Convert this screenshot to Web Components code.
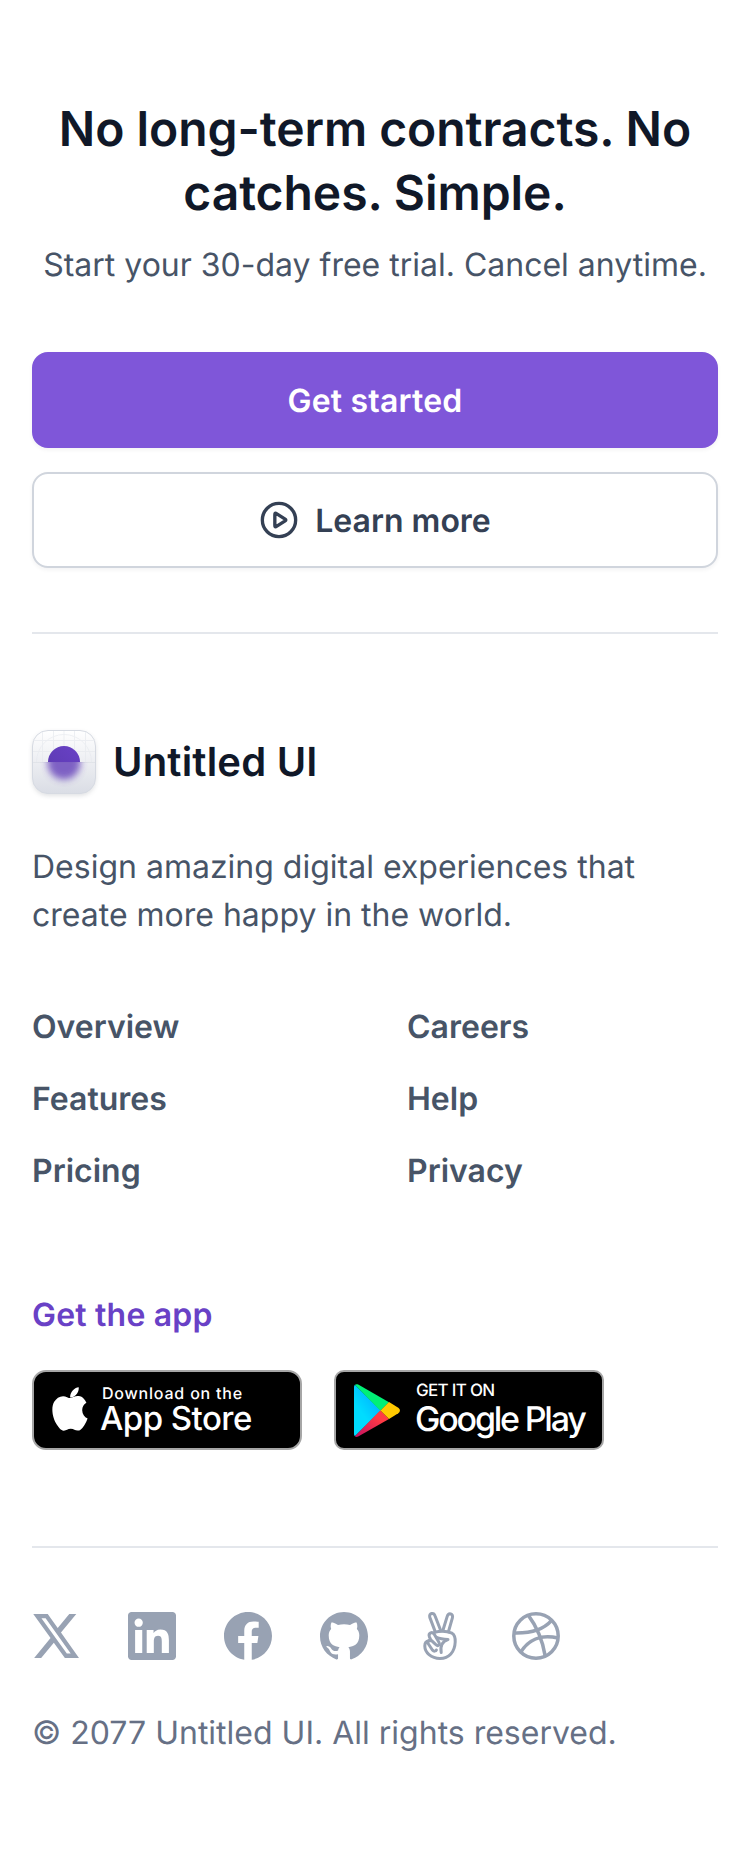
<!DOCTYPE html>
<html lang="en">
<head>
<meta charset="utf-8">
<title>Untitled UI</title>
<style>
html,body{margin:0;padding:0;background:#fff}
body{font-family:Inter,"Liberation Sans",sans-serif;font-size:32px;line-height:48px;color:#475467;text-rendering:geometricPrecision}
</style>
</head>
<body>
<cta-section>
  <span slot="title">No long-term contracts. No catches. Simple.</span>
  <span slot="text">Start your 30-day free trial. Cancel anytime.</span>
  <ui-button variant="primary">Get started</ui-button>
  <ui-button variant="secondary"><ui-icon slot="icon" name="play" size="40"></ui-icon>Learn more</ui-button>
</cta-section>
<site-footer>
  <brand-logo slot="brand">Untitled UI</brand-logo>
  <span slot="about">Design amazing digital experiences that create more happy in the world.</span>
  <footer-link slot="link">Overview</footer-link>
  <footer-link slot="link">Careers</footer-link>
  <footer-link slot="link">Features</footer-link>
  <footer-link slot="link">Help</footer-link>
  <footer-link slot="link">Pricing</footer-link>
  <footer-link slot="link">Privacy</footer-link>
  <span slot="apps-title">Get the app</span>
  <app-store-badge slot="app"></app-store-badge>
  <google-play-badge slot="app"></google-play-badge>
  <ui-icon slot="social" name="x" size="48"></ui-icon>
  <ui-icon slot="social" name="linkedin" size="48"></ui-icon>
  <ui-icon slot="social" name="facebook" size="48"></ui-icon>
  <ui-icon slot="social" name="github" size="48"></ui-icon>
  <ui-icon slot="social" name="angellist" size="48"></ui-icon>
  <ui-icon slot="social" name="dribbble" size="48"></ui-icon>
  <span slot="copyright">© 2077 Untitled UI. All rights reserved.</span>
</site-footer>
<script>
const define = (name, html) => customElements.define(name, class extends HTMLElement {
  constructor() {
    super();
    this.attachShadow({ mode: 'open' }).innerHTML = html;
  }
});

const ICONS = {
  play: '<g fill="none" stroke="currentColor" stroke-width="1.67" stroke-linecap="round" stroke-linejoin="round" transform="scale(1.2)"><circle cx="10" cy="10" r="8.33"/><path d="M7.917 7.471c0-.398 0-.597.083-.708a.417.417 0 0 1 .303-.166c.138-.01.306.098.64.313l3.934 2.529c.29.187.435.28.485.399a.417.417 0 0 1 0 .324c-.05.119-.195.212-.485.399L8.943 13.09c-.334.215-.502.323-.64.313A.417.417 0 0 1 8 13.237c-.083-.111-.083-.31-.083-.708z"/></g>',
  x: '<path transform="translate(-.7 -1.600) scale(1.06 1.133)" d="M18.244 2.250h3.308l-7.227 8.260 8.502 11.240H16.170l-5.214-6.817L4.990 21.750H1.680l7.730-8.835L1.254 2.250H8.080l4.713 6.231zm-1.161 17.520h1.833L7.084 4.126H5.117z"/>',
  linkedin: '<path d="M22.223 0H1.772C.792 0 0 .774 0 1.729v20.537C0 23.221.792 24 1.772 24h20.451c.98 0 1.777-.779 1.777-1.729V1.729C24 .774 23.203 0 22.223 0zM7.12 20.452H3.558V8.995H7.12v11.457zM5.339 7.434a2.064 2.064 0 1 1 0-4.128 2.064 2.064 0 0 1 0 4.128zM20.452 20.452h-3.558v-5.569c0-1.327-.024-3.037-1.852-3.037-1.851 0-2.133 1.449-2.133 2.944v5.662H9.356V8.995h3.413v1.566h.047c.474-.9 1.636-1.852 3.367-1.852 3.605 0 4.269 2.372 4.269 5.457v6.286z"/>',
  facebook: '<path d="M24 12c0-6.627-5.373-12-12-12S0 5.373 0 12c0 5.99 4.388 10.954 10.125 11.854V15.47H7.078V12h3.047V9.356c0-3.007 1.792-4.668 4.533-4.668 1.312 0 2.686.234 2.686.234v2.953H15.83c-1.491 0-1.956.925-1.956 1.875V12h3.328l-.532 3.469h-2.796v8.385C19.612 22.954 24 17.99 24 12z"/>',
  github: '<path fill-rule="evenodd" d="M12 0C5.370 0 0 5.500 0 12.300c0 5.300 3.440 9.800 8.200 11.390.600.110.820-.260.820-.580v-2.040c-3.340.730-4.040-1.610-4.040-1.610-.550-1.390-1.340-1.760-1.340-1.760-1.080-.740.090-.730.090-.730 1.200.090 1.840 1.240 1.840 1.240 1.070 1.830 2.800 1.300 3.490 1 .100-.780.420-1.310.760-1.610-2.670-.300-5.470-1.330-5.470-5.930 0-1.310.470-2.380 1.240-3.220-.130-.310-.540-1.530.110-3.180 0 0 1.010-.320 3.300 1.230a11.500 11.500 0 0 1 6.010 0c2.280-1.550 3.290-1.230 3.290-1.230.650 1.650.240 2.870.120 3.170.770.840 1.230 1.910 1.230 3.220 0 4.610-2.810 5.630-5.480 5.920.420.360.810 1.100.810 2.220v3.290c0 .320.220.700.830.580A12 12 0 0 0 24 12.300C24 5.500 18.630 0 12 0z"/>',
  angellist: '<g fill="none" stroke="currentColor" stroke-width="1.5" stroke-linejoin="round" stroke-linecap="round"><path d="M9.600 9.800 6.900 2.700C6.300.4 8.900.1 9.500 1.900L12.400 9.400"/><path d="M13.400 9.400 15.600 2.200C16.300.1 18.800.8 18.200 2.900L16.200 9.900"/><path d="M9.200 10.200C12 9.500 15.500 9.600 18 10.600 19.500 11.500 19.700 13 19.600 15 19.400 20 16.500 23.200 12 23.200 7.500 23.200 4.400 20.200 4.400 17 4.400 15.500 5.200 14.600 6.500 14.400"/><path d="M7.600 14.400 6.700 12.400C6 10.400 8.200 9.600 9.200 11.200L11.400 15C12.200 16.600 10.800 17.400 9.800 16.200L7.800 14.300C6.800 13.600 5.400 14.800 6.200 16L8.200 19C8.900 19.800 10 19.700 10.200 19"/><path d="M10.300 12.700C12 13.400 13.500 13.600 16 13.800 13.400 14.600 12 16.600 12.600 20.200"/></g>',
  dribbble: '<g fill="none" stroke="currentColor" stroke-width="1.75"><circle cx="12" cy="12" r="11.1"/><path d="M8.200 1.700C12 6.800 15.200 13.500 16.600 22"/><path d="M1 10.500c7.500.2 14.500-1.300 18.800-6.300"/><path d="M4.400 20.100C8 14 14.300 11 23 13"/></g>'
};

customElements.define('ui-icon', class extends HTMLElement {
  connectedCallback() {
    if (this.shadowRoot) return;
    const s = this.getAttribute('size');
    this.attachShadow({ mode: 'open' }).innerHTML =
      `<style>:host{display:block;flex:none}svg{display:block;overflow:visible}</style>
       <svg width="${s}" height="${s}" viewBox="0 0 24 24" fill="currentColor">${ICONS[this.getAttribute('name')]}</svg>`;
  }
});

define('ui-button', `<style>
:host{display:block}
button{box-sizing:border-box;width:100%;height:96px;display:flex;align-items:center;justify-content:center;gap:16px;border-radius:16px;font:600 32px/48px Inter,sans-serif;text-rendering:inherit;border:2px solid #7f56d9;background:#7f56d9;color:#fff;box-shadow:0 2px 4px rgba(16,24,40,.05);padding:0}
span{padding-top:2px}
:host([variant=primary]) span{letter-spacing:.18px}
:host([variant=secondary]) button{background:#fff;border-color:#d0d5dd;color:#344054}
</style><button><slot name="icon"></slot><span><slot></slot></span></button>`);

define('cta-section', `<style>
:host{display:block;padding:97px 32px 64px}
h2{margin:0 0 16px;font-weight:600;font-size:48px;line-height:64px;letter-spacing:-.05px;color:#101828;text-align:center}
p{margin:0 -16px 63px;text-align:center}
.actions{display:flex;flex-direction:column;gap:24px}
</style><h2><slot name="title"></slot></h2><p><slot name="text"></slot></p><div class="actions"><slot></slot></div>`);

define('brand-logo', `<style>
:host{display:flex;align-items:center;gap:17px;height:64px;color:#101828;font-weight:600;font-size:40px;line-height:64px;letter-spacing:.2px}
svg{display:block;overflow:visible;filter:drop-shadow(0 2px 2px rgba(16,24,40,.12))}
</style>
<svg width="64" height="64" viewBox="0 0 64 64">
<defs>
<linearGradient id="bg" x1="0" y1="0" x2="0" y2="1"><stop offset="0" stop-color="#fff"/><stop offset="1" stop-color="#dadde5"/></linearGradient>
<linearGradient id="dot" x1="0" y1="1" x2="1" y2="0"><stop stop-color="#5b3ab0"/><stop offset="1" stop-color="#6941c6"/></linearGradient>
<filter id="soft" x="-50%" y="-50%" width="200%" height="200%"><feGaussianBlur stdDeviation="3.800"/></filter>
<clipPath id="top"><rect width="64" height="32"/></clipPath>
<clipPath id="bottom"><rect y="32" width="64" height="32"/></clipPath>
</defs>
<rect x=".5" y=".5" width="63" height="63" rx="15.500" fill="url(#bg)" stroke="#d6dae2"/>
<g stroke="#e6e9ee" fill="none" opacity=".65" clip-path="url(#top)"><path d="M10.500 2v30M21.500 1v31M32 1v31M42.500 1v31M53.500 2v30M1 10.500h62M1 21.500h62"/><circle cx="32" cy="32" r="27.500"/></g>
<circle cx="32" cy="32" r="16" fill="url(#dot)" clip-path="url(#top)"/>
<g clip-path="url(#bottom)"><rect x="1" y="32" width="62" height="1" fill="#d0d5dd" opacity=".4"/><circle cx="32" cy="33" r="16.500" fill="#613bb8" opacity=".78" filter="url(#soft)"/></g>
</svg><span><slot></slot></span>`);

define('footer-link', `<style>:host{display:block;font-weight:600}</style><slot></slot>`);

const BADGE = `:host{box-sizing:border-box;display:flex;width:270px;height:80px;border:2px solid #a6a6a6;border-radius:14px;background:#000;color:#fff}
svg{display:block;flex:none}
.copy{display:flex;flex-direction:column;white-space:nowrap}
.copy span{display:block}`;

define('app-store-badge', `<style>${BADGE}
svg{margin:15px 0 0 18px}
.copy{margin-left:12px;padding-top:12px}
.small{font-size:16px;line-height:18px;font-weight:500;letter-spacing:.8px;padding-left:2px}
.big{font-size:33px;line-height:33px;font-weight:500;letter-spacing:-.55px}
</style>
<svg width="36" height="44" viewBox="0 0 36 44" fill="#fff"><path d="M26.700 0c.3 2.500-.7 5-2.200 6.800-1.500 1.800-3.900 3.200-6.300 3-.3-2.400.9-4.900 2.300-6.500C22 1.500 24.600.2 26.700 0zM34.400 15c-2.600 1.600-4.300 4.100-4.200 7.200.1 3.600 2.200 6.600 5.400 7.900-.7 2.200-1.800 4.300-3.100 6.200-1.800 2.700-3.700 5.400-6.600 5.400-2.900.1-3.800-1.700-7.100-1.700s-4.300 1.700-7 1.800c-2.900.1-5-2.900-6.900-5.600C1.200 30.800-1.700 20.800 2.200 14.100c1.900-3.300 5.200-5.400 8.900-5.500 2.800 0 5.400 1.900 7.100 1.900s4.900-2.300 8.200-2c1.400.1 5.400.6 8 6.500z" transform="translate(0 .2) scale(1 1.040)"/></svg>
<div class="copy"><span class="small">Download on the</span><span class="big">App Store</span></div>`);

define('google-play-badge', `<style>${BADGE}
:host{border-radius:10px}
svg{margin:12px 0 0 18px}
.copy{margin-left:14px;padding-top:9px}
.small{font-size:17px;line-height:20px;font-weight:500;letter-spacing:-.7px;padding-left:1px}
.big{font-size:34px;line-height:37px;font-weight:500;letter-spacing:-2.200px}
</style>
<svg width="47" height="53" viewBox="0 0 47 53">
<defs><linearGradient id="blue" x1="1" y1="0" x2=".3" y2="1"><stop stop-color="#00a0ff"/><stop offset=".7" stop-color="#00dcff"/></linearGradient>
<linearGradient id="red" x1="1" y1="0" x2="0" y2="1"><stop offset=".3" stop-color="#ff3a44"/><stop offset="1" stop-color="#c31162"/></linearGradient></defs>
<path d="M.9.8C.4 1.200 0 2 0 3v47c0 1 .4 1.800.9 2.300L27 26.500z" fill="url(#blue)"/>
<path d="M.9.8C1.800 0 3 0 4.200.6L35 18.200l-8.600 8.600z" fill="#00f076"/>
<path d="M.9 52.300c.9.800 2.100.7 3.300.1L35 34.900l-8.600-8.600z" fill="url(#red)"/>
<path d="m35 18.100 9.300 5.700c2.200 1.500 2.200 4 0 5.400L35 34.900l-8.500-8.400z" fill="#ffc900"/></svg>
<div class="copy"><span class="small">GET IT ON</span><span class="big">Google Play</span></div>`);

define('site-footer', `<style>
:host{display:block;padding:0 32px 95px}
.main{border-top:2px solid #e4e7ec;padding:96px 0}
p{margin:49px 0 64px}
nav{display:grid;grid-template-columns:1fr 1fr;column-gap:64px;row-gap:24px;margin-bottom:96px}
h3{margin:0 0 31px;font-size:32px;line-height:48px;font-weight:600;letter-spacing:.2px;color:#6941c6}
.apps{display:flex;gap:32px}
.end{border-top:2px solid #e4e7ec;padding-top:64px}
.social{display:flex;gap:48px;color:#98a2b3;margin-bottom:49px}
small{display:block;font-size:32px;color:#667085}
</style>
<div class="main"><slot name="brand"></slot><p><slot name="about"></slot></p>
<nav><slot name="link"></slot></nav>
<h3><slot name="apps-title"></slot></h3><div class="apps"><slot name="app"></slot></div></div>
<div class="end"><div class="social"><slot name="social"></slot></div><small><slot name="copyright"></slot></small></div>`);
</script>
</body>
</html>
